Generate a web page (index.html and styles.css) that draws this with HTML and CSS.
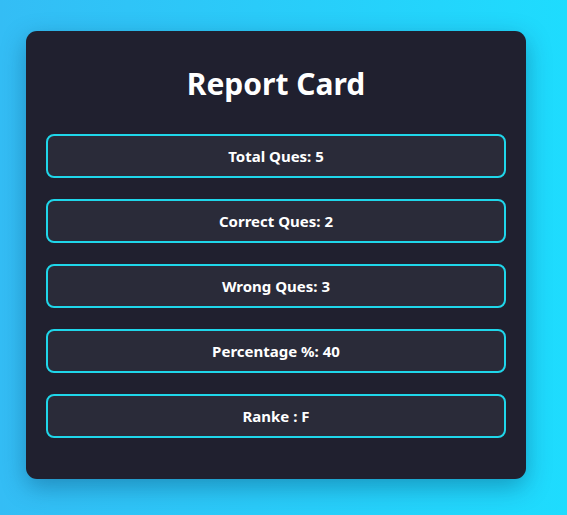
FILE: index.html
```html
<!DOCTYPE html>
<html lang="en">
<head>
<meta charset="utf-8">
<title>Report Card</title>
<link rel="stylesheet" href="styles.css">
</head>
<body>
<div class="card">
  <h1 class="title">Report Card</h1>
  <div class="rows">
    <div class="row">Total Ques: 5</div>
    <div class="row">Correct Ques: 2</div>
    <div class="row">Wrong Ques: 3</div>
    <div class="row">Percentage %: 40</div>
    <div class="row">Ranke : F</div>
  </div>
</div>
</body>
</html>
```
FILE: styles.css
```css
html, body {
  margin: 0;
  padding: 0;
}
body {
  width: 567px;
  height: 515px;
  overflow: hidden;
  background: linear-gradient(90deg, #34bdf5 0%, #1edcfe 100%);
  font-family: "Noto Sans", "Open Sans", sans-serif;
  padding: 31px 0 0 26px;
  box-sizing: border-box;
}
.card {
  width: 500px;
  height: 448px;
  box-sizing: border-box;
  background: #20202f;
  border-radius: 11px;
  box-shadow: 0 8px 24px rgba(0, 40, 80, 0.35);
  padding: 0 20px;
  color: #fff;
}
.title {
  margin: 0;
  height: 103px;
  display: flex;
  align-items: center;
  justify-content: center;
  padding-top: 2px;
  box-sizing: border-box;
  font-size: 30px;
  font-weight: 700;
}
.rows {
  display: flex;
  flex-direction: column;
  gap: 21px;
}
.row {
  height: 44px;
  box-sizing: border-box;
  border: 2px solid #1fd6ea;
  border-radius: 8px;
  background: #2a2b39;
  display: flex;
  align-items: center;
  justify-content: center;
  font-size: 15px;
  font-weight: 700;
}
```
